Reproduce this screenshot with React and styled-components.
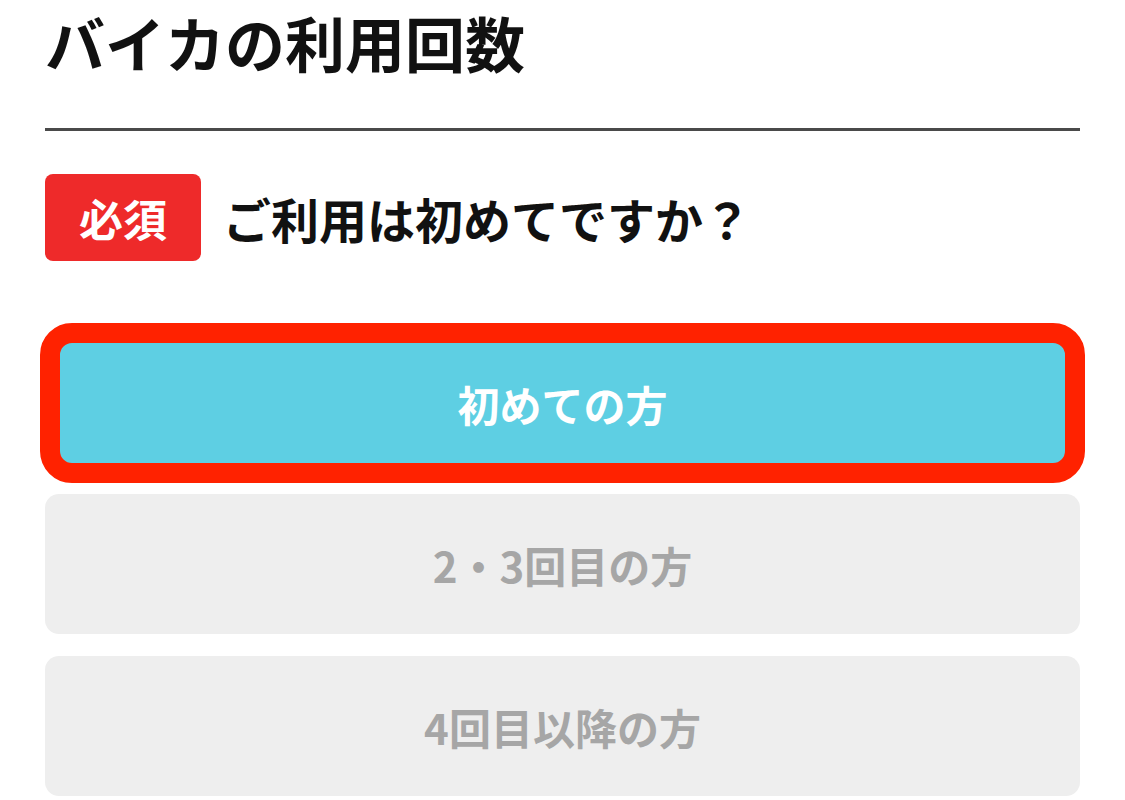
import React, { useState } from "react";
import styled, { createGlobalStyle } from "styled-components";

const GlobalStyle = createGlobalStyle`
  body {
    margin: 0;
    background: #ffffff;
    font-family: "Noto Sans CJK JP", "Noto Sans", sans-serif;
  }
`;

const OPTIONS = ["初めての方", "2・3回目の方", "4回目以降の方"];

export default function App() {
  const [selected, setSelected] = useState(0);

  return (
    <Page>
      <GlobalStyle />
      <Title>バイカの利用回数</Title>
      <Divider />
      <QuestionRow>
        <Badge>必須</Badge>
        <Question>ご利用は初めてですか？</Question>
      </QuestionRow>
      <Options>
        {OPTIONS.map((label, i) => (
          <Option key={label} $active={selected === i} onClick={() => setSelected(i)}>
            {label}
          </Option>
        ))}
      </Options>
    </Page>
  );
}

const Page = styled.div`
  width: 1035px;
  padding: 0 45px;
  display: flex;
  flex-direction: column;
`;

const Title = styled.h1`
  margin: 0;
  padding-top: 4px;
  font-size: 60px;
  line-height: 76px;
  font-weight: 700;
  color: #111;
`;

const Divider = styled.hr`
  margin: 48px 0 0;
  border: none;
  height: 3px;
  background: #4a4a4a;
`;

const QuestionRow = styled.div`
  display: flex;
  align-items: center;
  gap: 22px;
  margin-top: 43px;
`;

const Badge = styled.span`
  width: 156px;
  height: 87px;
  border-radius: 8px;
  background: #ee2a2a;
  color: #fff;
  font-size: 44px;
  font-weight: 700;
  display: flex;
  align-items: center;
  justify-content: center;
`;

const Question = styled.span`
  font-size: 48px;
  font-weight: 700;
  color: #111;
`;

const Options = styled.div`
  display: flex;
  flex-direction: column;
  gap: 22px;
  margin-top: 62px;
`;

const Option = styled.button`
  font-family: inherit;
  font-size: 42px;
  font-weight: 700;
  cursor: pointer;
  display: flex;
  align-items: center;
  justify-content: center;
  box-sizing: border-box;
  height: ${(p) => (p.$active ? "160px" : "140px")};
  margin: ${(p) => (p.$active ? "0 -5px -11px" : "0")};
  border: ${(p) => (p.$active ? "20px solid #ff2200" : "none")};
  border-radius: ${(p) => (p.$active ? "32px" : "14px")};
  background: ${(p) => (p.$active ? "#5ecfe3" : "#eeeeee")};
  color: ${(p) => (p.$active ? "#ffffff" : "#a6a6a6")};
`;
